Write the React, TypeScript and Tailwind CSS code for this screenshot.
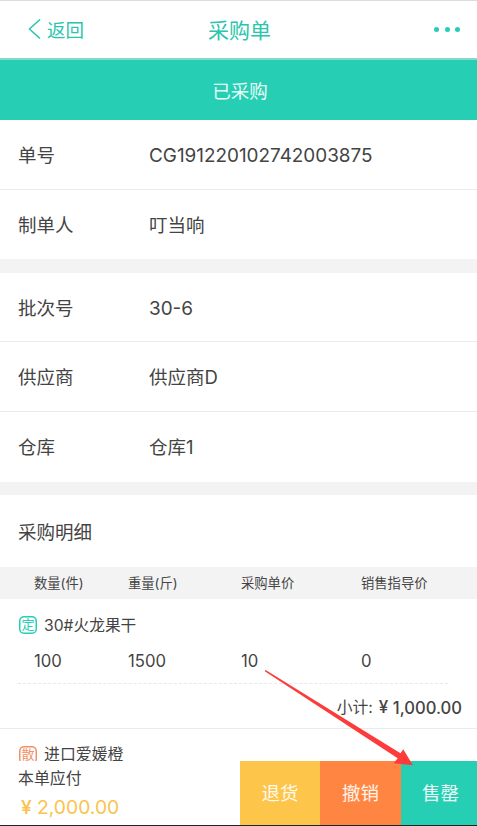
import React from 'react';
import { clsx } from 'clsx';

const ORDER_INFO = [
  { label: '单号', value: 'CG191220102742003875' },
  { label: '制单人', value: '叮当响' },
];

const BATCH_INFO = [
  { label: '批次号', value: '30-6' },
  { label: '供应商', value: '供应商D' },
  { label: '仓库', value: '仓库1' },
];

const COLUMNS = 'grid grid-cols-[94px_113px_120px_1fr] pl-[34px]';

function InfoRows({ rows }: { rows: { label: string; value: string }[] }) {
  return (
    <dl className="divide-y divide-[#ebebeb] text-[18.5px]">
      {rows.map((row) => (
        <div key={row.label} className="flex h-[69.6px] items-center pt-[3px] pl-[18px]">
          <dt className="w-[131px]">{row.label}</dt>
          <dd className={clsx(/^\w/.test(row.value) && 'pt-px text-[18.9px]')}>{row.value}</dd>
        </div>
      ))}
    </dl>
  );
}

function Tag({ text, className }: { text: string; className: string }) {
  return (
    <span
      className={clsx(
        'flex h-[18px] w-[18px] shrink-0 items-center justify-center rounded-[5px] text-[13px] leading-none inset-ring-[1.5px]',
        className
      )}
    >
      {text}
    </span>
  );
}

export default function App() {
  return (
    <div className="relative flex h-[826px] w-[477px] flex-col overflow-hidden border-t border-b border-t-[#dcdcdc] border-b-[#222] bg-white font-['Inter','Noto_Sans_CJK_SC',sans-serif] text-[#444]">
      <header className="grid h-[59px] shrink-0 grid-cols-3 items-center border-b-2 border-[#84d9c9] text-[#2bc5ad]">
        <button className="flex items-center gap-[6px] pt-[2px] pl-[28px] text-[18.5px]">
          <svg width="13" height="20" viewBox="0 0 13 20" fill="none" stroke="currentColor" strokeWidth="1.5" className="-mt-[3px]">
            <path d="M12 0.5L1.5 10L12 19.5" />
          </svg>
          返回
        </button>
        <h1 className="pt-[2px] pl-[2px] text-center text-[21px]">采购单</h1>
        <div className="flex justify-end gap-[5.5px] pr-[17px]">
          <i className="h-[5px] w-[5px] rounded-full bg-[#26ceb4]" />
          <i className="h-[5px] w-[5px] rounded-full bg-[#26ceb4]" />
          <i className="h-[5px] w-[5px] rounded-full bg-[#26ceb4]" />
        </div>
      </header>

      <div className="flex h-[60px] shrink-0 items-center justify-center bg-[#26ceb4] pt-[3px] pl-[3px] text-[18.5px] text-white/90">
        已采购
      </div>

      <main className="flex-1 overflow-hidden">
        <InfoRows rows={ORDER_INFO} />
        <div className="h-[13.6px] bg-[#f3f3f3]" />
        <InfoRows rows={BATCH_INFO} />
        <div className="h-[13.6px] bg-[#f3f3f3]" />

        <h2 className="flex h-[72px] items-center pt-[4px] pl-[18px] text-[18.5px]">采购明细</h2>
        <div className={clsx(COLUMNS, 'h-[32px] items-center bg-[#f3f3f3] pt-[2px] text-[13.3px]')}>
          <span>数量(件)</span>
          <span>重量(斤)</span>
          <span>采购单价</span>
          <span>销售指导价</span>
        </div>

        <section className="h-[130px] border-b border-[#ebebeb]">
          <div className="flex h-[51px] items-center gap-[7px] pl-[19px] text-[15.7px]">
            <Tag text="定" className="inset-ring-[#26ceb4] text-[#26ceb4]" />
            <span className="pt-[2px]">30#火龙果干</span>
          </div>
          <div className={clsx(COLUMNS, 'h-[22px] items-center text-[16.7px] leading-[22px]')}>
            <span>100</span>
            <span>1500</span>
            <span>10</span>
            <span>0</span>
          </div>
          <div className="mr-[29px] ml-[18px] h-[12px] border-b border-dashed border-[#e8e8e8]" />
          <div className="flex h-[45px] items-center justify-end pt-[3px] pr-[15px]">
            <span className="pr-[6px] text-[15.8px]">小计:</span>
            <span className="w-[14px] text-[17px] font-medium">¥</span>
            <span className="text-[16.6px] font-medium">1,000.00</span>
          </div>
        </section>

        <section className="flex h-[51px] items-center gap-[7px] pl-[19px] text-[15.9px]">
          <Tag text="散" className="inset-ring-[#f39068] text-[#f39068]" />
          <span className="pt-px">进口爱媛橙</span>
        </section>
      </main>

      <footer className="flex h-[64px] shrink-0 bg-white text-[18.5px] text-white/90">
        <div className="w-[240px] pl-[18px] text-[#444]">
          <p className="h-[34px] text-[15.9px] leading-[36px]">本单应付</p>
          <p className="flex pl-[3px] text-[19.3px] leading-[24px] text-[#f9c44d]">
            <span className="w-[16px] font-medium">¥</span>
            <span>2,000.00</span>
          </p>
        </div>
        <button className="w-[80px] bg-[#fdc54a] pt-[2px]">退货</button>
        <button className="w-[81px] bg-[#ff8642] pt-[2px]">撤销</button>
        <button className="flex-1 bg-[#26ceb4] pt-[2px] pl-[3px]">售罄</button>
      </footer>

      {/* pointer from the unit price to the sold-out button */}
      <svg className="pointer-events-none absolute top-[668px] left-[264px]" width="151" height="98" viewBox="264 669 151 98">
        <path d="M265 670.3L264.8 671.2L397.7 758.3L393.7 763.3L413 765.2L403.2 749.3L400.5 753.3L266 670.3Z" fill="#fc3b3a" />
      </svg>
    </div>
  );
}
